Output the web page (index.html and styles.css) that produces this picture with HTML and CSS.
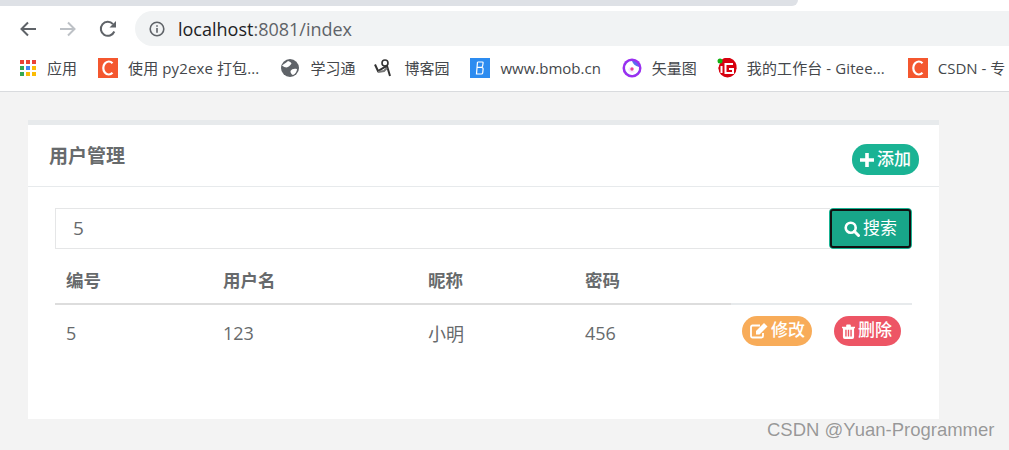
FILE: index.html
```html
<!DOCTYPE html>
<html lang="zh">
<head>
<meta charset="utf-8">
<title>用户管理</title>
<link rel="stylesheet" href="styles.css">
</head>
<body>
<div class="tabstrip"><div class="tab"></div></div>
<div class="toolbar">
  <svg class="nav" viewBox="0 0 20 20"><path d="M18 10H4M10 3.500 3.500 10l6.500 6.500" fill="none" stroke="#5f6368" stroke-width="2"/></svg>
  <svg class="nav" viewBox="0 0 20 20"><path d="M2 10h14M10 3.500l6.500 6.500-6.500 6.500" fill="none" stroke="#bdc1c6" stroke-width="2"/></svg>
  <svg class="nav" viewBox="0 0 20 20"><path d="M16.300 12.500A7 7 0 1 1 15 5.100" fill="none" stroke="#5f6368" stroke-width="2"/><path d="M11.500 8.500H18V2z" fill="#5f6368"/></svg>
  <div class="address">
    <svg class="info" viewBox="0 0 16 16"><circle cx="8" cy="8" r="6.800" fill="none" stroke="#5f6368" stroke-width="1.600"/><path d="M7.200 7h1.600v4.800H7.200zM7.200 4.200h1.600v1.600H7.200z" fill="#5f6368"/></svg>
    <span class="host">localhost</span><span class="path">:8081/index</span>
  </div>
</div>
<div class="bookmarks">
  <div class="mark"><svg class="ico" viewBox="0 0 16 16"><g><rect x="0" y="0" width="4" height="4" fill="#ea4335"/><rect x="6" y="0" width="4" height="4" fill="#ea4335"/><rect x="12" y="0" width="4" height="4" fill="#ea4335"/><rect x="0" y="6" width="4" height="4" fill="#34a853"/><rect x="6" y="6" width="4" height="4" fill="#4285f4"/><rect x="12" y="6" width="4" height="4" fill="#fbbc05"/><rect x="0" y="12" width="4" height="4" fill="#34a853"/><rect x="6" y="12" width="4" height="4" fill="#fbbc05"/><rect x="12" y="12" width="4" height="4" fill="#fbbc05"/></g></svg><span>应用</span></div>
  <div class="mark mark-py"><svg class="ico ico-lg" viewBox="0 0 20 20"><rect width="20" height="20" fill="#f4572f"/><path d="M14.500 5.200A5.500 6.500 0 1 0 14.500 14.800" fill="none" stroke="#fff" stroke-width="2.200"/></svg><span>使用 py2exe 打包...</span></div>
  <div class="mark mark-globe"><svg class="ico ico-lg" viewBox="0 0 20 20"><circle cx="10" cy="10" r="9" fill="#5f6368"/><path d="M2 7.500c3-2.500 4.500-3 6-4.500 2 .5 2.500 1 3.500 2.500C10 8 8.500 9 6.500 9.500 5 9.500 3.500 8.500 2 7.500zM10.500 13c1.500-2 3-2.500 6.500-2 0 2.500-1.500 5-4 6-1.500-.5-2.500-2-2.500-4z" fill="#fff"/></svg><span>学习通</span></div>
  <div class="mark"><svg class="ico ico-lg" viewBox="0 0 20 20"><circle cx="11" cy="5" r="3" fill="none" stroke="#333" stroke-width="1.600"/><path d="M1 6.500 4 13l7-4 2-1 3 10" fill="none" stroke="#333" stroke-width="2"/><path d="M4 14l6-1 3-3" fill="none" stroke="#777" stroke-width="2"/></svg><span>博客园</span></div>
  <div class="mark"><svg class="ico ico-lg" viewBox="0 0 20 20"><rect width="20" height="20" fill="#2d8cf0"/><path d="M7.500 4h4.700q1 0 .9 1l-.5 3q-.2 1.300-1.300 1.300H7.200M7.500 4 6.500 16h4.800q1.200 0 1.400-1.200l.4-3.500q.1-2-1.600-2" fill="none" stroke="#fff" stroke-width="1.200"/></svg><span>www.bmob.cn</span></div>
  <div class="mark mark-vec"><svg class="ico ico-lg" viewBox="0 0 20 20"><circle cx="10" cy="10" r="9.500" fill="#9a2ff0"/><circle cx="10" cy="10" r="7" fill="#5a6cf0"/><path d="M10 3c1 3 3 5 7 6a7 7 0 1 1-7-6z" fill="#fff"/><path d="M6 11.500a4 4 0 0 0 7 1.500 5 5 0 0 1-5-4.500z" fill="#f6e6ff"/><circle cx="10" cy="11" r="1.700" fill="#e84393"/></svg><span>矢量图</span></div>
  <div class="mark mark-gitee"><svg class="ico ico-lg" viewBox="0 0 20 20"><path d="M5 1.500A9 9 0 1 1 1.500 9.500" fill="#d7000f"/><circle cx="10.500" cy="10.500" r="9" fill="#d7000f"/><path d="M4.500 8v7M16 6H8.500v9H16v-4h-4" fill="none" stroke="#fff" stroke-width="2"/><circle cx="3" cy="3" r="2.500" fill="#13b013"/></svg><span>我的工作台 - Gitee...</span></div>
  <div class="mark"><svg class="ico ico-lg" viewBox="0 0 20 20"><rect width="20" height="20" fill="#f4572f"/><path d="M14.500 5.200A5.500 6.500 0 1 0 14.500 14.800" fill="none" stroke="#fff" stroke-width="2.200"/></svg><span>CSDN - 专</span></div>
</div>
<main class="page">
  <section class="card">
    <header class="card-head">
      <h2 class="title">用户管理</h2>
      <a class="pill pill-add"><svg class="fa fa-plus" viewBox="0 0 14 14"><path d="M5.200 0h3.600v5.200H14v3.600H8.800V14H5.200V8.800H0V5.200h5.200z"/></svg><span class="pill-text">添加</span></a>
    </header>
    <div class="card-body">
      <form class="search">
        <input class="search-input" type="text" value="5">
        <button class="search-btn" type="button"><svg class="fa fa-search" viewBox="0 0 16 16"><circle cx="6.700" cy="6.700" r="5" fill="none" stroke="#fff" stroke-width="2.600"/><path d="M10.300 10.300 14.500 14.500" stroke="#fff" stroke-width="3" stroke-linecap="round"/></svg><span class="pill-text">搜索</span></button>
      </form>
      <table class="users">
        <thead>
          <tr><th class="c1">编号</th><th class="c2">用户名</th><th class="c3">昵称</th><th class="c4">密码</th><th class="c5"></th></tr>
        </thead>
        <tbody>
          <tr>
            <td>5</td><td>123</td><td>小明</td><td>456</td>
            <td class="actions">
              <a class="pill pill-edit"><svg class="fa fa-edit" viewBox="0 0 18 16"><path d="M13 10v3a1.500 1.500 0 0 1-1.500 1.500h-9A1.500 1.500 0 0 1 1 13V4a1.500 1.500 0 0 1 1.500-1.500H10" fill="none" stroke="#fff" stroke-width="1.800"/><path d="M6 8 14 0l3.500 3.500-8 8H6z" fill="#fff"/></svg><span class="pill-text">修改</span></a>
              <a class="pill pill-del"><svg class="fa fa-trash" viewBox="0 0 14 16"><path d="M4.500 3V1.500A1 1 0 0 1 5.500.5h3a1 1 0 0 1 1 1V3H14v1.500h-1V14a2 2 0 0 1-2 2H3a2 2 0 0 1-2-2V4.500H0V3zM3.500 6v7.500h1.500V6zM6.250 6v7.500h1.500V6zM9 6v7.500h1.500V6z" fill="#fff" fill-rule="evenodd"/></svg><span class="pill-text">删除</span></a>
            </td>
          </tr>
        </tbody>
      </table>
    </div>
  </section>
</main>
<div class="watermark">CSDN @Yuan-Programmer</div>
</body>
</html>
```
FILE: styles.css
```css
* { box-sizing: border-box; }
html, body { margin: 0; height: 450px; overflow: hidden; }
body {
  position: relative;
  background: #f3f3f3;
  font-family: "Open Sans", "Noto Sans CJK SC", sans-serif;
  color: #676a6c;
}
.tabstrip { height: 11px; background: #fff; }
.tab {
  width: 798px; height: 6px;
  background: #dee1e6;
  border-bottom-right-radius: 8px;
}
.toolbar {
  height: 35px;
  background: #fff;
  display: flex;
  align-items: center;
  padding-left: 18px;
}
.nav { width: 20px; height: 20px; margin-right: 20px; flex: none; }
.nav:nth-child(3) { margin-right: 17px; }
.address {
  flex: 1;
  height: 35px;
  background: #f1f3f4;
  border-radius: 18px 0 0 18px;
  display: flex;
  align-items: center;
  padding-left: 14px;
  font-size: 18px;
}
.info { width: 16px; height: 16px; margin-right: 13px; }
.host { color: #202124; }
.path { color: #5f6368; }
.bookmarks {
  height: 46px;
  background: #fff;
  border-bottom: 1px solid #d9dbde;
  display: flex;
  align-items: center;
  padding: 0 0 2px 20px;
  white-space: nowrap;
  overflow: hidden;
  font-size: 15px;
  color: #44474b;
}
.mark { display: flex; align-items: center; flex: none; margin-right: 21px; }
.mark-py span { letter-spacing: 0.12px; }
.mark-globe { margin-right: 19px; }
.mark-vec { margin-right: 20px; }
.mark-gitee { margin-right: 23px; }
.mark-gitee span { letter-spacing: 0.1px; }
.ico { width: 16px; height: 16px; margin-right: 11px; flex: none; }
.ico-lg { width: 20px; height: 20px; margin-right: 10px; }
.page { padding: 28px 70px 0 28px; }
.card {
  height: 299px;
  background: #fff;
  border-top: 5px solid #e7eaec;
}
.card-head {
  height: 62px;
  border-bottom: 1px solid #e7eaec;
  display: flex;
  justify-content: space-between;
  padding: 19px 20px 0 21px;
}
.title { margin: 0; font-size: 19px; line-height: 24px; font-weight: 700; color: #676a6c; }
.pill {
  display: inline-flex;
  align-items: center;
  height: 30px;
  border-radius: 15px;
  color: #fff;
  font-size: 17px;
  font-weight: 500;
}
.pill-text { line-height: 22px; padding-bottom: 2px; }
.pill-add { background: #1ab394; padding: 0 8px; width: 67px; height: 31px; }
.fa { flex: none; fill: #fff; }
.fa-plus { width: 14px; height: 14px; margin-right: 3px; }
.card-body { padding: 21px 27px 0; }
.search { display: flex; height: 41px; margin: 0; }
.search-input {
  flex: 1;
  min-width: 0;
  border: 1px solid #e5e6e7;
  border-right: 0;
  padding: 0 17px 1px;
  font: 19px "Open Sans", sans-serif;
  color: #676a6c;
  outline: none;
}
.search-btn {
  width: 83px;
  margin-left: -1px;
  background: #18a689;
  border: 1px solid #1ab394;
  border-radius: 4px;
  outline: 2px solid #111;
  outline-offset: -3px;
  color: #fff;
  font: 17px "Open Sans", "Noto Sans CJK SC", sans-serif;
  display: flex;
  align-items: center;
  justify-content: center;
  padding: 0;
}
.fa-search { width: 16px; height: 16px; margin-right: 3px; }
.users {
  width: 857px;
  border-collapse: collapse;
  table-layout: fixed;
  font-size: 18px;
}
.users th {
  height: 55px;
  padding: 6px 11px 0;
  text-align: left;
  font-size: 17.500px;
  font-weight: 700;
  border-bottom: 2px solid #dddddd;
}
.users th.c5 { border-bottom-color: #e7eaec; }
.c1, .c3, .c4 { width: 157px; }
.c2 { width: 205px; }
.c5 { width: 181px; }
.users td { height: 58px; padding: 0 11px 2px; vertical-align: middle; }
.users td.actions { padding-bottom: 5px; white-space: nowrap; font-size: 0; }
.pill-edit { background: #f8ac59; width: 70px; padding-left: 8px; margin-right: 22px; }
.pill-del { background: #ed5565; width: 67px; padding-left: 8px; }
.fa-edit { width: 18px; height: 16px; margin-right: 3px; }
.fa-trash { width: 13px; height: 15px; margin-right: 3px; }
.watermark {
  position: absolute;
  left: 767px;
  top: 419px;
  font-family: "Liberation Sans", sans-serif;
  font-size: 18.500px;
  color: rgba(90, 90, 90, 0.6);
  white-space: nowrap;
}
```
